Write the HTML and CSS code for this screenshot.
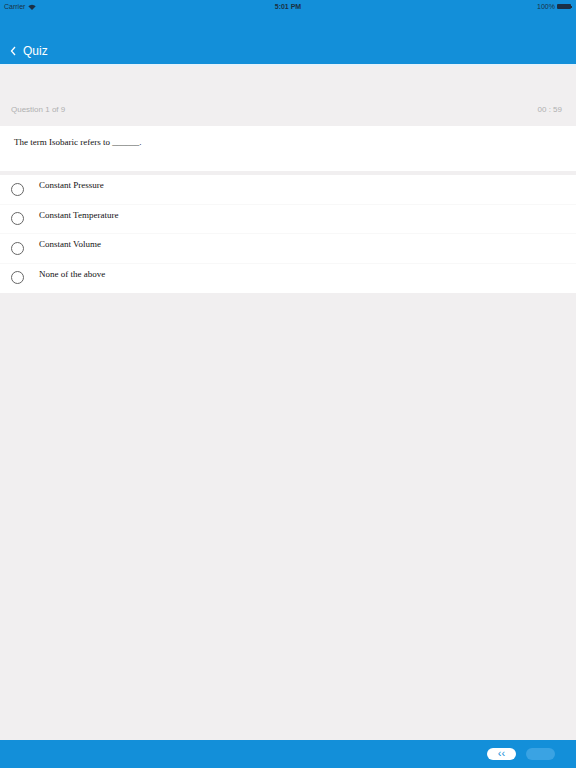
FILE: index.html
```html
<!DOCTYPE html>
<html>
<head>
<meta charset="utf-8">
<link rel="stylesheet" href="styles.css">
</head>
<body>
<div class="app">
  <header class="top">
    <div class="status">
      <div class="st-left">Carrier
        <svg class="wifi" width="8" height="6" viewBox="0 0 8 6"><path d="M4 6 L0.3 2.2 A5.3 5.3 0 0 1 7.7 2.2 Z" fill="#1b2f44"/></svg>
      </div>
      <div class="st-mid">5:01 PM</div>
      <div class="st-right">100%
        <span class="battery"><span class="bat-body"></span><span class="bat-tip"></span></span>
      </div>
    </div>
    <div class="nav">
      <svg class="chev" width="7" height="10" viewBox="0 0 7 10"><path d="M5 1 L1.5 5 L5 9" fill="none" stroke="#fff" stroke-width="1.3"/></svg>
      <span class="nav-title">Quiz</span>
    </div>
  </header>
  <div class="edge"></div>
  <main class="content">
    <div class="meta">
      <span>Question 1 of 9</span>
      <span>00 : 59</span>
    </div>
    <div class="question">The term Isobaric refers to ______.</div>
    <div class="options">
      <div class="opt"><span class="radio"></span><span class="opt-text">Constant Pressure</span></div>
      <div class="opt"><span class="radio"></span><span class="opt-text">Constant Temperature</span></div>
      <div class="opt"><span class="radio"></span><span class="opt-text">Constant Volume</span></div>
      <div class="opt"><span class="radio"></span><span class="opt-text">None of the above</span></div>
    </div>
  </main>
  <footer class="bottom">
    <span class="pill pill-prev">&lsaquo;&lsaquo;</span>
    <span class="pill pill-next"></span>
  </footer>
</div>
</body>
</html>
```
FILE: styles.css
```css
* { box-sizing: border-box; }
html, body { margin: 0; padding: 0; }
body { background: #f1eff0; font-family: "Liberation Sans", Arial, sans-serif; }
.app { width: 576px; height: 768px; display: flex; flex-direction: column; }
.top { background: #138fd9; height: 64px; display: flex; flex-direction: column; }
.status { height: 13px; display: flex; align-items: center; justify-content: space-between; padding: 0 4px; font-size: 7px; color: #1b2f44; }
.st-left { display: flex; align-items: center; gap: 3px; flex: 1; }
.st-mid { font-weight: bold; flex: 1; text-align: center; }
.st-right { flex: 1; display: flex; justify-content: flex-end; align-items: center; gap: 2px; }
.battery { display: flex; align-items: center; }
.bat-body { width: 14px; height: 5px; background: #1b2f44; border-radius: 1px; }
.bat-tip { width: 1px; height: 2px; background: #1b2f44; }
.nav { display: flex; align-items: center; padding: 31px 0 0 10px; gap: 6px; }
.chev { display: block; }
.nav-title { color: #fff; font-size: 12px; line-height: 14px; }
.edge { height: 2px; background: #e6f1f9; }
.content { flex: 1; display: flex; flex-direction: column; }
.meta { height: 60px; display: flex; justify-content: space-between; align-items: flex-end; padding: 0 14px 12px 11px; font-size: 8px; color: #b0b0b0; }
.question { background: #fff; height: 45px; padding: 11px 14px; font-family: "Liberation Serif", "Times New Roman", serif; font-size: 9px; color: #111; }
.options { margin-top: 4px; background: #fff; }
.opt { height: 29.5px; display: flex; align-items: flex-start; padding-left: 11px; border-bottom: 1px solid #f8f8f8; }
.opt:last-child { border-bottom: none; }
.radio { width: 13px; height: 13px; border: 1px solid #666; border-radius: 50%; margin-top: 7.5px; flex: none; }
.opt-text { margin-left: 15px; margin-top: 5px; font-family: "Liberation Serif", "Times New Roman", serif; font-size: 9px; color: #111; }
.bottom { margin-top: auto; background: #138fd9; height: 28px; display: flex; justify-content: flex-end; align-items: center; gap: 10px; padding-right: 21px; }
.pill { width: 29px; height: 12px; border-radius: 6px; display: flex; align-items: center; justify-content: center; font-size: 11px; line-height: 1; }
.pill-prev { background: #fff; color: #138fd9; padding-bottom: 1px; }
.pill-next { background: #3aa3e3; }
```
